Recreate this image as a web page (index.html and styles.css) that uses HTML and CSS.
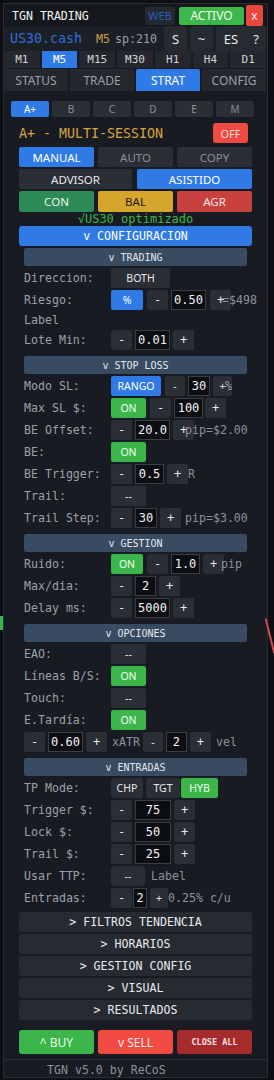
FILE: index.html
```html
<!DOCTYPE html>
<html>
<head>
<meta charset="utf-8">
<link rel="stylesheet" href="styles.css">
</head>
<body>
<div class="chart-mark green-mark"></div>
<div class="chart-mark red-mark"></div>
<div class="panel">
  <div class="titlebar">
    <span class="title">TGN TRADING</span>
    <div class="title-btns">
      <span class="btn web">WEB</span>
      <span class="btn activo">ACTIVO</span>
      <span class="btn close">x</span>
    </div>
  </div>
  <div class="symbar">
    <span class="sym">US30.cash</span>
    <span class="tf-cur">M5</span>
    <span class="spread">sp:210</span>
    <div class="sym-btns">
      <span class="btn sb w23">S</span>
      <span class="btn sb w23">~</span>
      <span class="btn sb w30 joined-l">ES</span>
      <span class="btn sb w20 joined-r">?</span>
    </div>
  </div>
  <div class="tfrow">
    <span class="btn tf">M1</span>
    <span class="btn tf on">M5</span>
    <span class="btn tf">M15</span>
    <span class="btn tf">M30</span>
    <span class="btn tf">H1</span>
    <span class="btn tf">H4</span>
    <span class="btn tf">D1</span>
  </div>
  <div class="tabs">
    <span class="btn tab">STATUS</span>
    <span class="btn tab">TRADE</span>
    <span class="btn tab on">STRAT</span>
    <span class="btn tab">CONFIG</span>
  </div>

  <div class="content">
    <div class="subtabs">
      <span class="btn st on">A+</span>
      <span class="btn st">B</span>
      <span class="btn st">C</span>
      <span class="btn st">D</span>
      <span class="btn st">E</span>
      <span class="btn st">M</span>
    </div>
    <div class="strat-head">
      <span class="strat-name">A+ - MULTI-SESSION</span>
      <span class="btn off">OFF</span>
    </div>
    <div class="trio">
      <span class="btn mode blue">MANUAL</span>
      <span class="btn mode dim">AUTO</span>
      <span class="btn mode dim">COPY</span>
    </div>
    <div class="duo">
      <span class="btn mode adv">ADVISOR</span>
      <span class="btn mode blue asis">ASISTIDO</span>
    </div>
    <div class="trio risk">
      <span class="btn mode con">CON</span>
      <span class="btn mode bal">BAL</span>
      <span class="btn mode agr">AGR</span>
    </div>
    <div class="optim">√US30 optimizado</div>
    <div class="cfgbar">v CONFIGURACION</div>

    <div class="settings">
      <div class="secbar">v TRADING</div>
      <div class="row"><span class="lbl">Direccion:</span><span class="btn rb w59">BOTH</span></div>
      <div class="row"><span class="lbl">Riesgo:</span><span class="btn rb blue w32">%</span><span class="btn rb pm g4">-</span><span class="inp w35">0.50</span><span class="btn rb pm g4">+</span><span class="note n-9">=$498</span></div>
      <div class="row short"><span class="lbl">Label</span></div>
      <div class="row"><span class="lbl">Lote Min:</span><span class="btn rb pm">-</span><span class="inp w35">0.01</span><span class="btn rb pm">+</span></div>

      <div class="secbar">v STOP LOSS</div>
      <div class="row"><span class="lbl">Modo SL:</span><span class="btn rb blue w50">RANGO</span><span class="btn rb w20 g4">-</span><span class="inp w22">30</span><span class="btn rb w19">+</span><span class="note n-8">%</span></div>
      <div class="row"><span class="lbl">Max SL $:</span><span class="btn rb green w35">ON</span><span class="btn rb pm g4">-</span><span class="inp w29">100</span><span class="btn rb pm g2">+</span></div>
      <div class="row"><span class="lbl">BE Offset:</span><span class="btn rb pm">-</span><span class="inp w35">20.0</span><span class="btn rb pm">+</span><span class="note n-9">pip=$2.00</span></div>
      <div class="row"><span class="lbl">BE:</span><span class="btn rb green w35">ON</span></div>
      <div class="row"><span class="lbl">BE Trigger:</span><span class="btn rb pm">-</span><span class="inp w29">0.5</span><span class="btn rb pm">+</span><span class="note n-1">R</span></div>
      <div class="row"><span class="lbl">Trail:</span><span class="btn rb w35">--</span></div>
      <div class="row"><span class="lbl">Trail Step:</span><span class="btn rb pm">-</span><span class="inp w22">30</span><span class="btn rb pm">+</span><span class="note n4">pip=$3.00</span></div>

      <div class="secbar">v GESTION</div>
      <div class="row"><span class="lbl">Ruido:</span><span class="btn rb green w32">ON</span><span class="btn rb pm g4">-</span><span class="inp w29">1.0</span><span class="btn rb pm">+</span><span class="note n-3">pip</span></div>
      <div class="row"><span class="lbl">Max/dia:</span><span class="btn rb pm">-</span><span class="inp w21">2</span><span class="btn rb pm">+</span></div>
      <div class="row"><span class="lbl">Delay ms:</span><span class="btn rb pm">-</span><span class="inp w35">5000</span><span class="btn rb pm">+</span></div>

      <div class="secbar">v OPCIONES</div>
      <div class="row"><span class="lbl">EAO:</span><span class="btn rb w35">--</span></div>
      <div class="row"><span class="lbl">Líneas B/S:</span><span class="btn rb green w35">ON</span></div>
      <div class="row"><span class="lbl">Touch:</span><span class="btn rb w35">--</span></div>
      <div class="row"><span class="lbl">E.Tardía:</span><span class="btn rb green w35">ON</span></div>
      <div class="row"><span class="btn rb pm">-</span><span class="inp w35">0.60</span><span class="btn rb pm">+</span><span class="note n5">xATR</span><span class="btn rb w20 g3">-</span><span class="inp w21">2</span><span class="btn rb pm">+</span><span class="note n5">vel</span></div>

      <div class="secbar">v ENTRADAS</div>
      <div class="row"><span class="lbl">TP Mode:</span><span class="btn rb w32">CHP</span><span class="btn rb w34">TGT</span><span class="btn rb green w37 g1">HYB</span></div>
      <div class="row"><span class="lbl">Trigger $:</span><span class="btn rb pm">-</span><span class="inp w36">75</span><span class="btn rb pm">+</span></div>
      <div class="row"><span class="lbl">Lock $:</span><span class="btn rb pm">-</span><span class="inp w36">50</span><span class="btn rb pm">+</span></div>
      <div class="row"><span class="lbl">Trail $:</span><span class="btn rb pm">-</span><span class="inp w36">25</span><span class="btn rb pm">+</span></div>
      <div class="row"><span class="lbl">Usar TTP:</span><span class="btn rb w34">--</span><span class="note n3">Label</span></div>
      <div class="row"><span class="lbl">Entradas:</span><span class="btn rb pm">-</span><span class="inp w14 g1">2</span><span class="btn rb w18">+</span><span class="note n-1">0.25% c/u</span></div>
    </div>

    <div class="collapsed">
      <div class="coll">&gt; FILTROS TENDENCIA</div>
      <div class="coll">&gt; HORARIOS</div>
      <div class="coll">&gt; GESTION CONFIG</div>
      <div class="coll">&gt; VISUAL</div>
      <div class="coll">&gt; RESULTADOS</div>
    </div>

    <div class="actions">
      <span class="btn act buy">^ BUY</span>
      <span class="btn act sell">v SELL</span>
      <span class="btn act closeall">CLOSE ALL</span>
    </div>
  </div>
  <div class="footer">TGN v5.0 by ReCoS</div>
</div>
</body>
</html>
```

FILE: styles.css
```css
* { box-sizing: border-box; }

body {
  margin: 0;
  width: 274px;
  height: 1080px;
  overflow: hidden;
  background: #0d0f14;
  position: relative;
  font-family: "DejaVu Sans Mono", monospace;
}

.chart-mark { position: absolute; }
.green-mark {
  left: 0; top: 616px; width: 3px; height: 14px;
  background: #3cb54a;
}
.red-mark {
  left: 269px; top: 618px; width: 2px; height: 36px;
  background: #d04a52;
  transform: rotate(-14deg);
}

.panel {
  margin: 3px 0 0 3px;
  width: 265px;
  height: 1075px;
  background: #181b21;
  border: 1px solid #2a2e35;
  display: flex;
  flex-direction: column;
}

.btn {
  display: flex;
  align-items: center;
  justify-content: center;
  background: #2a2e35;
  color: #e6e8eb;
  font-family: "Noto Sans", sans-serif;
  border-radius: 2px;
  white-space: nowrap;
  flex: none;
}

/* title bar */
.titlebar {
  height: 24px;
  display: flex;
  align-items: center;
  padding: 1px 4px 0 8px;
  background: #14171c;
}
.title {
  color: #f2f2f2;
  font-size: 11.6px;
}
.title-btns {
  margin-left: auto;
  display: flex;
  align-items: center;
}
.web {
  width: 30px; height: 18px;
  background: #232831;
  color: #2e5fb8;
  font-size: 11px;
  margin-right: 4px;
}
.activo {
  width: 65px; height: 18px;
  background: #3db64b;
  color: #f3fff3;
  font-size: 12px;
  margin-right: 2px;
}
.close {
  width: 17px; height: 21px;
  background: #e9463f;
  color: #ffe9e9;
  font-size: 12px;
}

/* symbol bar */
.symbar {
  height: 27px;
  display: flex;
  align-items: center;
  padding: 0 1px 0 6px;
  background: #1c1f26;
}
.sym {
  color: #2f6fd6;
  font-size: 13.3px;
}
.tf-cur {
  color: #c9a248;
  font-size: 11.6px;
  margin-left: 14px;
}
.spread {
  color: #9aa0a8;
  font-size: 11.6px;
  margin-left: 5px;
}
.sym-btns {
  margin-left: auto;
  display: flex;
  gap: 3px;
}
.sb {
  height: 25px;
  background: #262a31;
  color: #e6e8eb;
  font-size: 13px;
}
.joined-l { border-radius: 2px 0 0 2px; }
.joined-r { border-radius: 0 2px 2px 0; margin-left: -3px; }

/* timeframe + tabs */
.tfrow {
  height: 17px;
  display: flex;
  gap: 2px;
  padding-right: 1px;
  margin-bottom: 1px;
}
.tf {
  flex: 1;
  height: 17px;
  background: #24272e;
  color: #cfd2d7;
  font-family: "DejaVu Sans Mono", monospace;
  font-size: 11px;
  border-radius: 0;
}
.tf.on { background: #2f7ae5; color: #fff; }

.tabs {
  height: 22px;
  display: flex;
  gap: 2px;
  padding-right: 1px;
}
.tab {
  flex: 1;
  height: 22px;
  background: #24272e;
  color: #9aa0a8;
  font-size: 12px;
  border-radius: 0;
}
.tab.on { background: #2f7ae5; color: #fff; border-radius: 2px 2px 0 0; }

/* content */
.content {
  padding: 10px 15px 0;
  display: flex;
  flex-direction: column;
}
.subtabs {
  height: 16px;
  display: flex;
  gap: 3px;
  margin: 0 -2px 0 -8px;
}
.st {
  flex: 1;
  height: 16px;
  font-size: 10px;
  color: #8a8f98;
  background: #2a2e35;
}
.st.on { background: #2f7ae5; color: #fff; }

.strat-head {
  height: 24px;
  margin-top: 4px;
  margin-bottom: 2px;
  display: flex;
  align-items: center;
}
.strat-name {
  color: #d6a443;
  font-size: 13.3px;
}
.off {
  margin-left: auto;
  margin-right: 4px;
  width: 35px; height: 20px;
  background: #ef4b42;
  color: #f0d8d8;
  font-size: 11px;
  border-radius: 3px;
}

.trio, .duo {
  display: flex;
  height: 20px;
  margin-bottom: 2px;
}
.trio { gap: 4px; }
.duo { gap: 5px; }
.trio .mode { flex: 1; }
.mode {
  height: 100%;
  font-size: 11.5px;
}
.adv { width: 113px; }
.asis { flex: 1; }
.blue { background: #2f7ae5; color: #fff; }
.dim { color: #8a8f98; }
.risk { height: 21px; margin-bottom: 0; }
.con { background: #2e8a56; color: #e9f5ee; }
.bal { background: #d5a52c; color: #1f1a10; }
.agr { background: #c8413e; color: #f5e3e3; }

.optim {
  height: 14px;
  line-height: 15px;
  text-align: center;
  color: #3cb54a;
  font-size: 12px;
}
.cfgbar {
  height: 20px;
  background: #2f7ae5;
  color: #fff;
  font-size: 11.6px;
  display: flex;
  align-items: center;
  justify-content: center;
  border-radius: 3px;
  margin-bottom: 2px;
}

/* settings */
.settings {
  margin: 0 5px;
  display: flex;
  flex-direction: column;
}
.secbar {
  height: 18px;
  background: #384b61;
  color: #e3e8ee;
  font-size: 10px;
  display: flex;
  align-items: center;
  justify-content: center;
  border-radius: 2px;
  margin: 4px 0 2px;
}
.secbar:first-child { margin-top: 0; }
.row {
  height: 20px;
  display: flex;
  align-items: center;
  gap: 3px;
  margin-bottom: 2px;
}
.row.short { height: 16px; }
.lbl {
  width: 84px;
  color: #9ba1a9;
  font-size: 11.6px;
  flex: none;
}
.rb {
  height: 20px;
  font-size: 10.5px;
  background: #2a2e35;
  color: #e8eaee;
}
.rb.blue { background: #2f7ae5; color: #fff; }
.rb.green { background: #3cb54a; color: #effff0; }
.pm { width: 21px; font-family: "DejaVu Sans Mono", monospace; font-size: 12px; }
.inp {
  height: 20px;
  border: 1px solid #3a3e46;
  background: #0c0e12;
  color: #f2f2f2;
  font-size: 12px;
  display: flex;
  align-items: center;
  justify-content: center;
  flex: none;
}
.note {
  color: #8c929b;
  font-size: 11.6px;
  white-space: nowrap;
  flex: none;
}
.n-9 { margin-left: -12px; }
.n-8 { margin-left: -10px; color: #9ba1a9; }
.n-3 { margin-left: -6px; }
.n-1 { margin-left: -3px; }
.n3 { margin-left: 3px; }
.n4 { margin-left: 1px; }
.n5 { margin-left: 2px; }
.g1 { margin-left: -2px; }
.g2 { margin-left: -1px; }
.g3 { margin-left: 0; }
.g4 { margin-left: 1px; }

.w14 { width: 14px; } .w18 { width: 18px; } .w19 { width: 19px; }
.w20 { width: 20px; } .w21 { width: 21px; } .w22 { width: 22px; }
.w23 { width: 23px; } .w29 { width: 29px; } .w30 { width: 30px; }
.w32 { width: 32px; } .w34 { width: 34px; } .w35 { width: 35px; }
.w36 { width: 36px; } .w37 { width: 37px; } .w50 { width: 50px; }
.w59 { width: 59px; }

/* collapsed */
.collapsed {
  margin-top: 2px;
  display: flex;
  flex-direction: column;
  gap: 2px;
}
.coll {
  height: 20px;
  background: #262a31;
  color: #e8eaee;
  font-size: 11.6px;
  display: flex;
  align-items: center;
  justify-content: center;
  border-radius: 2px;
}

.actions {
  margin-top: 10px;
  height: 24px;
  display: flex;
  gap: 4px;
}
.act { flex: 1; height: 24px; font-size: 12px; border-radius: 3px; }
.buy { background: #3cb54a; color: #eafbe9; }
.sell { background: #f04a41; color: #fff0ef; }
.closeall {
  background: #a62b2c;
  color: #f5e1e1;
  font-family: "DejaVu Sans Mono", monospace;
  font-size: 8.5px;
  font-weight: bold;
}

.footer {
  margin-top: 5px;
  border-top: 1px solid #2a2e35;
  height: 22px;
  display: flex;
  align-items: center;
  padding: 2px 0 0 43px;
  color: #8c929b;
  font-size: 11.6px;
}
```
